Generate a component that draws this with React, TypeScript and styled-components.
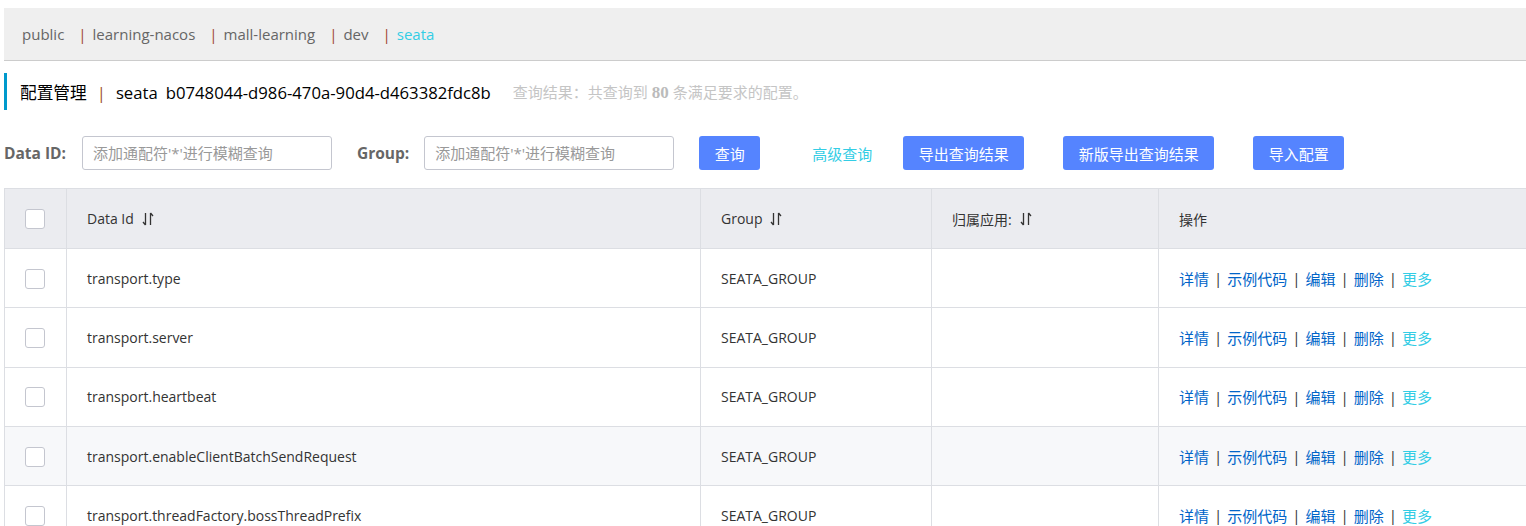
import React from 'react';
import styled, { createGlobalStyle } from 'styled-components';

const GlobalStyle = createGlobalStyle`
    html, body {
        margin: 0;
        padding: 0;
        background: #fff;
        overflow: hidden;
    }
    body {
        font-family: "Open Sans", "Noto Sans CJK SC", sans-serif;
        font-size: 14px;
        color: #333;
    }
`;

const namespaces = [
    { name: 'public', sep: false, active: false },
    { name: 'learning-nacos', sep: true, active: false },
    { name: 'mall-learning', sep: true, active: false },
    { name: 'dev', sep: true, active: false },
    { name: 'seata', sep: true, active: true },
];

const rows = [
    'transport.type',
    'transport.server',
    'transport.heartbeat',
    'transport.enableClientBatchSendRequest',
    'transport.threadFactory.bossThreadPrefix',
];

const actions = ['详情', '示例代码', '编辑', '删除'];

const SortIcon: React.FC = () => (
    <svg width="12" height="16" viewBox="0 0 12 16" fill="none" stroke="#333" strokeWidth="1.3">
        <path d="M3.5 2 V14 M1 11 L3.5 14" />
        <path d="M8.5 14 V2 M8.5 2 L11 5" />
    </svg>
);

const App: React.FC = () => {
    return (
        <>
            <GlobalStyle />
            <Page>
                <NamespaceBar>
                    {namespaces.map((ns) => (
                        <NamespaceItem key={ns.name}>
                            {ns.sep && <NsSep>|</NsSep>}
                            <NsName $active={ns.active}>{ns.name}</NsName>
                        </NamespaceItem>
                    ))}
                </NamespaceBar>

                <TitleRow>
                    <TitleText>
                        配置管理<TitleSep>|</TitleSep>seata<NsId>b0748044-d986-470a-90d4-d463382fdc8b</NsId>
                    </TitleText>
                    <ResultText>
                        查询结果：共查询到 <b>80</b> 条满足要求的配置。
                    </ResultText>
                </TitleRow>

                <SearchRow>
                    <FieldLabel>Data ID:</FieldLabel>
                    <SearchInput placeholder="添加通配符'*'进行模糊查询" />
                    <FieldLabel $gap>Group:</FieldLabel>
                    <SearchInput placeholder="添加通配符'*'进行模糊查询" />
                    <PrimaryButton $ml={25}>查询</PrimaryButton>
                    <TextButton>高级查询</TextButton>
                    <PrimaryButton $ml={0}>导出查询结果</PrimaryButton>
                    <PrimaryButton $ml={39}>新版导出查询结果</PrimaryButton>
                    <PrimaryButton $ml={39}>导入配置</PrimaryButton>
                </SearchRow>

                <Table>
                    <colgroup>
                        <col style={{ width: 62 }} />
                        <col style={{ width: 634 }} />
                        <col style={{ width: 231 }} />
                        <col style={{ width: 227 }} />
                        <col />
                    </colgroup>
                    <thead>
                        <tr>
                            <HeadCell $center>
                                <CheckBox />
                            </HeadCell>
                            <HeadCell>
                                <HeadInner>
                                    Data Id <SortIcon />
                                </HeadInner>
                            </HeadCell>
                            <HeadCell>
                                <HeadInner>
                                    Group <SortIcon />
                                </HeadInner>
                            </HeadCell>
                            <HeadCell>
                                <HeadInner>
                                    归属应用: <SortIcon />
                                </HeadInner>
                            </HeadCell>
                            <HeadCell>操作</HeadCell>
                        </tr>
                    </thead>
                    <tbody>
                        {rows.map((id, i) => (
                            <BodyRow key={id} $shaded={i === 3}>
                                <Cell $center>
                                    <CheckBox />
                                </Cell>
                                <Cell>{id}</Cell>
                                <Cell>SEATA_GROUP</Cell>
                                <Cell />
                                <Cell>
                                    <Actions>
                                        {actions.map((a) => (
                                            <React.Fragment key={a}>
                                                <ActionLink>{a}</ActionLink>
                                                <ActionSep>|</ActionSep>
                                            </React.Fragment>
                                        ))}
                                        <ActionLink $more>更多</ActionLink>
                                    </Actions>
                                </Cell>
                            </BodyRow>
                        ))}
                    </tbody>
                </Table>
            </Page>
        </>
    );
};

const Page = styled.div`
    padding: 8px 0 0 4px;
    overflow: hidden;
`;

const NamespaceBar = styled.div`
    display: flex;
    align-items: center;
    height: 52px;
    padding-left: 18px;
    background-color: #efefef;
    border-bottom: 1px solid #ccc;
    font-size: 15px;
`;

const NamespaceItem = styled.span`
    display: flex;
    align-items: center;
    margin-right: 14px;
`;

const NsSep = styled.span`
    color: #a0422d;
    margin-right: 6px;
`;

const NsName = styled.span<{ $active: boolean }>`
    color: ${({ $active }) => ($active ? '#33cde5' : '#666')};
`;

const TitleRow = styled.div`
    display: flex;
    align-items: center;
    margin-top: 12px;
    height: 37px;
    border-left: 3px solid #09c;
    padding-left: 13px;
`;

const TitleText = styled.span`
    font-size: 16.7px;
    color: #000;
`;

const TitleSep = styled.span`
    margin: 0 10px;
    color: #a0522d;
`;

const NsId = styled.span`
    margin-left: 8px;
`;

const ResultText = styled.span`
    margin-left: 22px;
    font-size: 15px;
    color: #c5c5c5;

    b {
        color: #bbb;
        font-family: "Liberation Serif", serif;
        font-size: 17px;
    }
`;

const SearchRow = styled.div`
    display: flex;
    align-items: center;
    margin-top: 26px;
    height: 34px;
`;

const FieldLabel = styled.span<{ $gap?: boolean }>`
    font-size: 15.5px;
    font-weight: bold;
    color: #666;
    margin-left: ${({ $gap }) => ($gap ? '25px' : '0')};
    margin-right: ${({ $gap }) => ($gap ? '15px' : '16px')};
`;

const SearchInput = styled.input`
    box-sizing: border-box;
    width: 250px;
    height: 34px;
    padding: 0 10px;
    border: 1px solid #c4c6cf;
    border-radius: 3px;
    font-family: inherit;
    font-size: 15px;
    outline: none;

    &::placeholder {
        color: #999;
    }
`;

const PrimaryButton = styled.button<{ $ml: number }>`
    box-sizing: border-box;
    height: 34px;
    padding: 0 15.5px;
    margin-left: ${({ $ml }) => $ml}px;
    background-color: #5584ff;
    color: #fff;
    border: none;
    border-radius: 3px;
    font-family: inherit;
    font-size: 15px;
    cursor: pointer;
`;

const TextButton = styled.span`
    color: #33cde5;
    font-size: 15px;
    margin: 0 31px 0 52px;
    cursor: pointer;
`;

const Table = styled.table`
    margin-top: 18px;
    width: calc(100% + 20px);
    border-collapse: collapse;
    table-layout: fixed;
`;

const HeadCell = styled.th<{ $center?: boolean }>`
    height: 59px;
    padding: 0 ${({ $center }) => ($center ? '0' : '20px')};
    background-color: #ebecf0;
    border: 1px solid #dcdee3;
    text-align: ${({ $center }) => ($center ? 'center' : 'left')};
    font-weight: normal;
    font-size: 14px;
    color: #333;
`;

const HeadInner = styled.span`
    display: inline-flex;
    align-items: center;
    gap: 8px;
`;

const BodyRow = styled.tr<{ $shaded: boolean }>`
    background-color: ${({ $shaded }) => ($shaded ? '#f7f8fa' : '#fff')};
`;

const Cell = styled.td<{ $center?: boolean }>`
    height: 58.3px;
    padding: 0 ${({ $center }) => ($center ? '0' : '20px')};
    border: 1px solid #dcdee3;
    text-align: ${({ $center }) => ($center ? 'center' : 'left')};
    color: #333;
`;

const CheckBox = styled.span`
    display: inline-block;
    box-sizing: border-box;
    width: 20px;
    height: 20px;
    margin-left: -2px;
    vertical-align: middle;
    border: 1px solid #c4c6cf;
    border-radius: 3px;
    background: #fff;
`;

const Actions = styled.span`
    display: inline-flex;
    align-items: center;
    font-size: 15px;
`;

const ActionLink = styled.a<{ $more?: boolean }>`
    color: ${({ $more }) => ($more ? '#33cde5' : '#0064c8')};
    cursor: pointer;
`;

const ActionSep = styled.span`
    margin: 0 5px;
    color: #333;
`;

export default App;
